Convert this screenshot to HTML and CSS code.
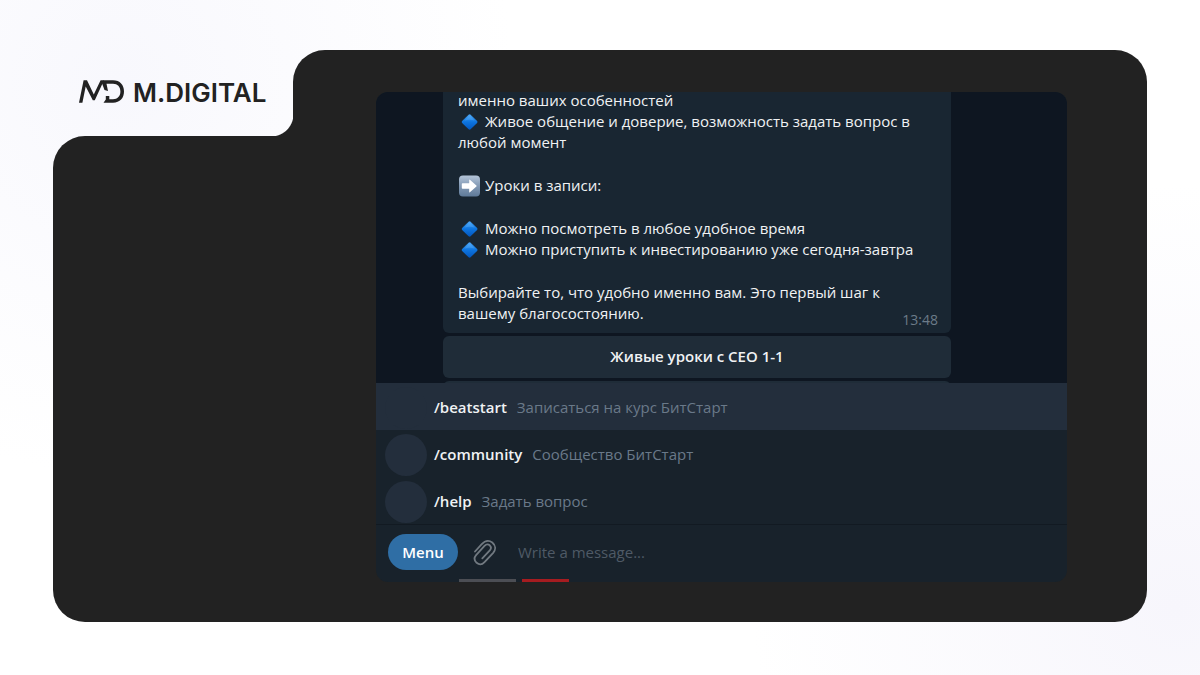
FILE: index.html
```html
<!DOCTYPE html>
<html lang="ru">

<head>
    <meta charset="UTF-8">
    <meta name="viewport" content="width=device-width, initial-scale=1.0">
    <title>M.DIGITAL</title>
    <link rel="stylesheet" href="styles.css">
</head>

<body>
    <!-- shared emoji shapes -->
    <svg class="sprite" aria-hidden="true">
        <defs>
            <linearGradient id="blue" x1="0" y1="0" x2="0" y2="1">
                <stop offset="0" stop-color="#4aa5f5" />
                <stop offset="0.5" stop-color="#0d74df" />
                <stop offset="1" stop-color="#0356bd" />
            </linearGradient>
            <linearGradient id="steel" x1="0" y1="0" x2="0" y2="1">
                <stop offset="0" stop-color="#b4c5d9" />
                <stop offset="0.5" stop-color="#8299b4" />
                <stop offset="1" stop-color="#5f7a99" />
            </linearGradient>
        </defs>
        <symbol id="diamond" viewBox="0 0 22 22">
            <path fill="url(#blue)" d="M10.6 3.7q1-.9 2 0l6.5 6.4q.8.9 0 1.8l-6.5 6.4q-1 .9-2 0l-6.5-6.4q-.8-.9 0-1.8z" />
            <path fill="#6dbcff" opacity=".3" d="M11.6 4l5 5.5q-5-1.5-10 0z" />
        </symbol>
        <symbol id="arrow" viewBox="0 0 22 22">
            <rect x="1" y="0.5" width="21" height="21" rx="4" fill="url(#steel)" />
            <path fill="#fff" d="M4.5 8.3h6.7V5.1q0-.8.7-.3l6.5 5.6q.6.6 0 1.2l-6.5 5.6q-.7.5-.7-.3v-3.2H4.5q-.7 0-.7-.7V9q0-.7.7-.7z" />
        </symbol>
    </svg>

    <main class="board">
        <header class="brand">
            <svg class="brand-mark" viewBox="0 0 46 24" fill="#222" aria-hidden="true">
                <path d="M0 22.7L4.6.3H8l6.8 14.2L21.6.3H25l-9.2 20h-2L6.7 6.5 3.4 22.7z" />
                <path d="M24.500.3H34c7 0 11 4.700 11 11.200S41 22.700 34 22.700h-9.500l2.300-3.200V16h3.500v3.200H34c4.500 0 7.400-3 7.400-7.700S38.500 3.800 34 3.800h-6.500L29 11l-3.500-1-3-8z" />
            </svg>
            <span class="brand-name">M.DIGITAL</span>
        </header>
        <div class="board-top"></div>
        <div class="board-body"></div>

        <section class="chat">
            <div class="history">
                <article class="message">
                    <p>именно ваших особенностей<br>
                        <svg class="emoji"><use href="#diamond" /></svg>Живое общение и доверие, возможность задать вопрос в<br>
                        любой момент</p>
                    <p><svg class="emoji"><use href="#arrow" /></svg>Уроки в записи:</p>
                    <p><svg class="emoji"><use href="#diamond" /></svg>Можно посмотреть в любое удобное время<br>
                        <svg class="emoji"><use href="#diamond" /></svg>Можно приступить к инвестированию уже сегодня-завтра</p>
                    <p>Выбирайте то, что удобно именно вам. Это первый шаг к<br>
                        вашему благосостоянию.</p>
                    <time class="message-time">13:48</time>
                </article>
                <button class="reply" type="button">Живые уроки с CEO 1-1</button>
                <!-- next button, only its edge is visible -->
                <button class="reply" type="button" aria-label="Далее"></button>
            </div>

            <ul class="commands">
                <li class="command active">
                    <span class="avatar"></span><b>/beatstart</b><span>Записаться на курс БитСтарт</span>
                </li>
                <li class="command">
                    <span class="avatar"></span><b>/community</b><span>Сообщество БитСтарт</span>
                </li>
                <li class="command">
                    <span class="avatar"></span><b>/help</b><span>Задать вопрос</span>
                </li>
            </ul>

            <form class="composer">
                <button class="menu" type="button">Menu</button>
                <button class="attach" type="button" aria-label="Attach">
                    <svg viewBox="0 0 24 28" fill="none" stroke="#717980" stroke-width="1.8" stroke-linecap="round">
                        <path d="M2 13.5L8.500 6.300C12 2.500 16 2 19.300 4.500c3.500 3 3.700 7 .9 10.300L11.500 24.100c-2.300 2.500-5.500 2.700-7.900.7-2.400-2.200-2.600-5.200-.5-7.700l8.400-9.200c1.700-1.800 3.700-1.900 5.200-.6 1.600 1.500 1.600 3.400.1 5.100L9.300 20.300" />
                    </svg>
                </button>
                <input class="text" type="text" placeholder="Write a message..." aria-label="Write a message">
            </form>
            <div class="marks">
                <span class="mark"></span>
                <span class="mark red"></span>
            </div>
        </section>
    </main>
</body>

</html>
```
FILE: styles.css
```css
* {
    box-sizing: border-box;
}

body {
    margin: 0;
    padding: 50px 53px 53px;
    min-height: 100vh;
    display: flex;
    font-family: "Open Sans", "Noto Sans", sans-serif;
    font-size: 15px;
    line-height: 21px;
    color: #f0f2f4;
    background:
        radial-gradient(circle at 10% 12%, #f8f8fd, rgba(248, 248, 253, 0) 32%),
        radial-gradient(circle at 98% 90%, #f7f6fc, rgba(247, 246, 252, 0) 32%),
        #fff;
}

button,
input {
    font: inherit;
    color: inherit;
    border: 0;
    padding: 0;
    background: none;
}

.sprite {
    position: absolute;
    width: 0;
    height: 0;
}

/* dark board with a cut-out for the logo */

.board {
    flex: 1;
    display: grid;
    grid-template-columns: 240px 1fr;
    grid-template-rows: 86px 1fr;
}

.board-top {
    grid-area: 1 / 2;
    background: #222;
    border-radius: 32px 32px 0 0;
}

.board-body {
    grid-area: 2 / 1 / 3 / 3;
    background: #222;
    border-radius: 32px 0 32px 32px;
}

.brand {
    grid-area: 1 / 1;
    display: flex;
    align-items: center;
    gap: 8px;
    padding: 0 0 2px 26px;
    color: #222;
    /* inner corner of the cut-out */
    background: radial-gradient(circle at 0 0, transparent 22px, #222 23px) right bottom / 22px 22px no-repeat;
}

.brand-mark {
    width: 46px;
    height: 24px;
}

.brand-name {
    font-family: Inter, sans-serif;
    font-size: 26px;
    font-weight: 600;
}

/* chat window */

.chat {
    grid-area: 1 / 2 / 3 / 3;
    margin: 42px 80px 40px 83px;
    display: flex;
    flex-direction: column;
    border-radius: 12px;
    overflow: hidden;
    background: #18222b;
}

.history {
    flex: 1 1 291px;
    height: 291px;
    overflow: hidden;
    display: flex;
    flex-direction: column;
    gap: 3px;
    padding: 0 116px 0 67px;
    background: #0e1621;
}

.message {
    position: relative;
    flex: none;
    margin-top: -12px;
    padding: 10px 15px 9px;
    border-radius: 6px;
    background: #192632;
}

.message p {
    margin: 0 0 22px;
    white-space: nowrap;
}

.message p:last-of-type {
    margin-bottom: 0;
}

.emoji {
    width: 22px;
    height: 22px;
    margin: -4px 5px -4px 0;
    vertical-align: -2px;
}

.message-time {
    position: absolute;
    right: 13px;
    bottom: 3px;
    font-size: 14px;
    color: #6c7b89;
}

.reply {
    flex: none;
    height: 42px;
    padding-bottom: 2px;
    border-radius: 6px;
    font-weight: 600;
    background: #1f2c38;
}

/* bot commands */

.commands {
    flex: none;
    margin: 0;
    padding: 0;
    list-style: none;
    border-bottom: 1px solid #121a22;
}

.command {
    height: 47px;
    display: flex;
    align-items: center;
    padding: 2px 0 0 9px;
    color: #6a7989;
}

.command.active {
    background: #232e3c;
}

.command b {
    margin: 0 10px 0 7px;
    font-weight: 600;
    color: #f0f2f4;
}

.avatar {
    width: 42px;
    height: 42px;
    border-radius: 50%;
    background: #232e3c;
}

/* input row */

.composer {
    flex: none;
    height: 54px;
    display: flex;
    align-items: center;
    padding: 0 12px;
}

.menu {
    width: 70px;
    height: 36px;
    border-radius: 18px;
    font-weight: 600;
    color: #fff;
    background: #2f6ea5;
}

.attach {
    width: 24px;
    height: 28px;
    margin: 0 21px 0 15px;
}

.attach svg {
    display: block;
}

.text {
    flex: 1;
    min-width: 0;
    outline: none;
}

.text::placeholder {
    color: #4f5a66;
    opacity: 1;
}

.marks {
    flex: none;
    display: flex;
    gap: 6px;
    padding-left: 83px;
}

.mark {
    width: 57px;
    height: 3px;
    background: #4c4e54;
}

.mark.red {
    width: 47px;
    background: #a61c20;
}
```
